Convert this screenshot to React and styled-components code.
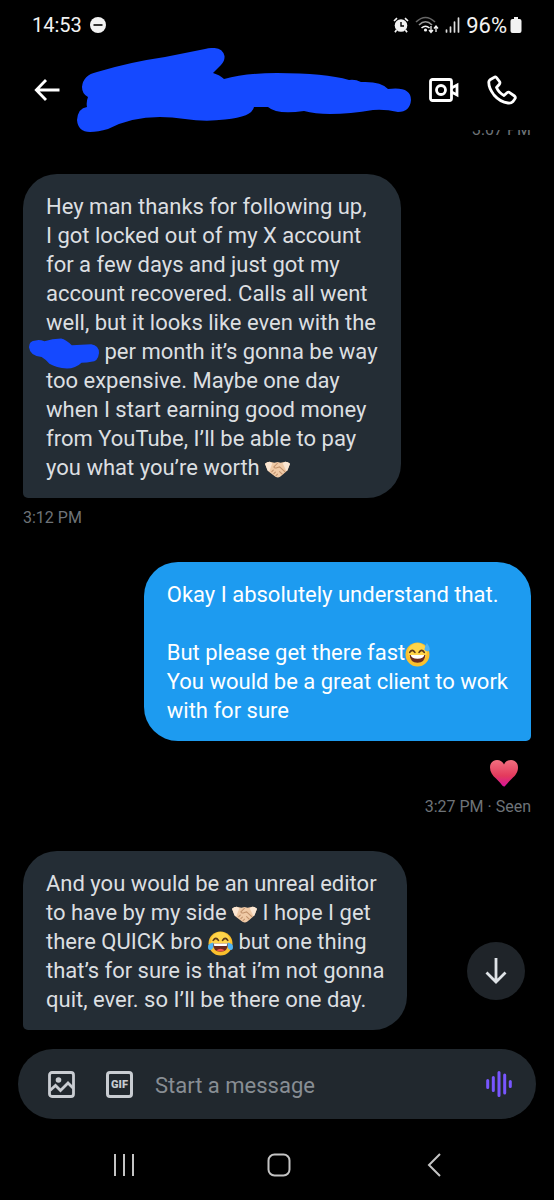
import React from "react";
import styled, { createGlobalStyle } from "styled-components";

const MESSAGES = [
    {
        id: 1,
        mine: false,
        lines: [
            ["Hey man thanks for following up,"],
            ["I got locked out of my X account"],
            ["for a few days and just got my"],
            ["account recovered. Calls all went"],
            ["well, but it looks like even with the"],
            [{ icon: "redacted" }, " per month it’s gonna be way"],
            ["too expensive. Maybe one day"],
            ["when I start earning good money"],
            ["from YouTube, I’ll be able to pay"],
            ["you what you’re worth ", { icon: "handshake" }],
        ],
        stamp: "3:12 PM",
    },
    {
        id: 2,
        mine: true,
        lines: [
            ["Okay I absolutely understand that."],
            [],
            ["But please get there fast", { icon: "sweat" }],
            ["You would be a great client to work"],
            ["with for sure"],
        ],
        reaction: true,
        stamp: "3:27 PM · Seen",
    },
    {
        id: 3,
        mine: false,
        lines: [
            ["And you would be an unreal editor"],
            ["to have by my side ", { icon: "handshake" }, " I hope I get"],
            ["there QUICK bro ", { icon: "joy" }, " but one thing"],
            ["that’s for sure is that i’m not gonna"],
            ["quit, ever. so I’ll be there one day."],
        ],
    },
];

const Handshake = () => (
    <Emoji viewBox="0 0 24 24" role="img" aria-label="handshake">
        <path
            d="M0 6.500Q2 4.500 4.500 4.500L9 5.500 12 4.800 15 5.500 19.500 4.500Q22 4.500 24 6.500L21.500 13 18 16 14.500 19Q12.500 20.500 10 19L4 14.500 2.500 13Z"
            fill="#f0caa6"
        />
        <path d="M0 6.500Q2 4.500 4.500 4.500L7 6 4 14 2.500 13Z" fill="#fbe6d2" />
        <path
            d="M24 6.500Q22 4.500 19.500 4.500L17 6 20.500 13.500 21.500 13Z"
            fill="#fbe6d2"
        />
        <path
            d="M12 6 8.500 9.500Q9 11.500 12 10L14 9.500 19 14M6.500 14 8 12.500M8.500 16 10 14.500M10.500 18 12 16.500M14 14 16.500 16.500"
            fill="none"
            stroke="#c2926c"
            strokeWidth="1"
            strokeLinecap="round"
        />
    </Emoji>
);

const Joy = () => (
    <Emoji viewBox="0 0 24 24" role="img" aria-label="face with tears of joy">
        <circle cx="12" cy="12" r="11.500" fill="#fbc02d" />
        <circle cx="12" cy="10" r="9" fill="#ffd54a" />
        <path
            d="M5 9Q7.500 5 10 9M14 9Q16.500 5 19 9"
            fill="none"
            stroke="#5d3a1a"
            strokeWidth="1.600"
            strokeLinecap="round"
        />
        <path d="M4.500 12H19.500Q19 20 12 20T4.500 12Z" fill="#6b2b1f" />
        <path d="M5.500 12H18.500L18 14.500H6Z" fill="#fff" />
        <path d="M8 18.500Q12 15.500 16 18.500 12 21 8 18.500Z" fill="#f0554a" />
        <path
            d="M5 11Q6 17 3 18T0 15Q0 12 5 11ZM19 11Q18 17 21 18T24 15Q24 12 19 11Z"
            fill="#4fb4f5"
        />
    </Emoji>
);

const Sweat = () => (
    <Emoji viewBox="0 0 24 24" role="img" aria-label="grinning face with sweat">
        <circle cx="12" cy="12" r="11.500" fill="#fbc02d" />
        <circle cx="12" cy="10" r="9" fill="#ffd54a" />
        <path
            d="M4.500 10Q7 6 9.500 10M13.500 10Q16 6 18.500 10"
            fill="none"
            stroke="#5d3a1a"
            strokeWidth="1.600"
            strokeLinecap="round"
        />
        <path
            d="M4.500 12.500H19.500Q19 20 12 20T4.500 12.500Z"
            fill="#6b2b1f"
        />
        <path d="M5.500 12.500H18.500Q18 16 12 16T5.500 12.500Z" fill="#fff" />
        <path d="M21 1Q24.500 6 23.500 8T19 8Q18 6 21 1Z" fill="#4fb4f5" />
    </Emoji>
);

const Redacted = () => (
    <Scribble viewBox="0 0 72 31" aria-hidden="true">
        <path
            d="M0 9Q0 2 7 2Q11 1 16 3Q24 0 33 0Q38 1 44 7L64 6Q72 7 72 15Q71 24 64 24Q60 25 54 25Q48 31 39 31Q28 30 21 26Q18 22 13 19Q1 18 0 9Z"
            fill="#1549ff"
        />
    </Scribble>
);

const ICONS = {
    handshake: Handshake,
    joy: Joy,
    sweat: Sweat,
    redacted: Redacted,
};

const Part = ({ part }) => {
    if (typeof part === "string") return part;
    const Icon = ICONS[part.icon];
    return <Icon />;
};

const StatusBar = () => (
    <Status>
        <StatusGroup>
            <Clock>14:53</Clock>
            <svg width="16" height="16" viewBox="0 0 16 16">
                <circle cx="8" cy="8" r="8" fill="#f2f2f2" />
                <path d="M3.500 8H12.500" stroke="#000" strokeWidth="1.600" />
            </svg>
        </StatusGroup>
        <StatusIcons>
            <svg width="16" height="16" viewBox="0 0 16 16">
                <circle cx="8" cy="8.500" r="6.300" fill="#f2f2f2" />
                <path
                    d="M1 4 4 1.200M15 4 12 1.200M3.500 13 2 15.300M12.500 13 14 15.300"
                    stroke="#f2f2f2"
                    strokeWidth="1.700"
                />
                <path
                    d="M8 5V9H11"
                    fill="none"
                    stroke="#000"
                    strokeWidth="1.400"
                />
            </svg>
            <svg width="24" height="18" viewBox="0 0 24 18">
                <g fill="none" strokeWidth="1.600">
                    <path d="M1 6Q10.500-3 20 6" stroke="#666" />
                    <path d="M4 9Q10.500 2.500 17 9" stroke="#999" />
                    <path d="M6.500 12Q10.500 8.500 14.500 12" stroke="#f2f2f2" />
                    <path
                        d="M16 10V16M14 14 16 16.500 18 14M21 16V10.500M19 12.500 21 10 23 12.500"
                        stroke="#f2f2f2"
                        strokeWidth="1.300"
                    />
                </g>
                <circle cx="10.500" cy="14" r="1.600" fill="#f2f2f2" />
            </svg>
            <svg width="15" height="16" viewBox="0 0 15 16">
                <path
                    d="M1.500 13V15M5.500 10V15M9.500 5V15M13.500 1V15"
                    stroke="#ddd"
                    strokeWidth="1.700"
                    strokeLinecap="round"
                />
            </svg>
            <Battery>
                96%
                <svg width="12" height="18" viewBox="0 0 12 18">
                    <path
                        d="M4 1H8V3H9.500Q11.500 3 11.500 5V15Q11.500 17 9.500 17H2.500Q.5 17 .5 15V5Q.5 3 2.500 3H4Z"
                        fill="#f2f2f2"
                    />
                </svg>
            </Battery>
        </StatusIcons>
    </Status>
);

const ChatHeader = () => (
    <Header>
        <IconButton aria-label="Back">
            <svg width="26" height="22" viewBox="0 0 26 22">
                <path
                    d="M25.500 11H2.500M12 1 2.300 11 12 21"
                    fill="none"
                    stroke="#fff"
                    strokeWidth="2.800"
                />
            </svg>
        </IconButton>
        <Name viewBox="77 47 334 84" aria-hidden="true">
            <path
                d="M82 86Q83 74 97 71Q130 61 165 56L205 48Q222 44 224.500 55Q225 60 221 64L213 72Q220 74 224 78Q245 72 277 72Q325 72 349 79Q355 78 361 81Q381 80 388 88Q411 85 411 99Q410 111 398 111Q385 108 373 109Q350 113 330 113Q315 113 304 110Q277 114 268 106H254Q252 116 225 118.500Q205 121 185 118Q140 111 108 128Q98 131 90 131Q78 131 77 119Q78 107 87 106Q86 101 88 96Q82 93 82 86Z"
                fill="#1549ff"
            />
        </Name>
        <HeaderActions>
            <IconButton aria-label="Video call">
                <svg width="30" height="24" viewBox="0 0 30 24">
                    <rect
                        x="1.500"
                        y="1.500"
                        width="21"
                        height="21"
                        rx="2"
                        fill="none"
                        stroke="#fff"
                        strokeWidth="2.800"
                    />
                    <circle
                        cx="12"
                        cy="12"
                        r="4.500"
                        fill="none"
                        stroke="#fff"
                        strokeWidth="2.800"
                    />
                    <path
                        d="M22.500 10 28 7V17L22.500 14"
                        fill="none"
                        stroke="#fff"
                        strokeWidth="2.800"
                    />
                </svg>
            </IconButton>
            <IconButton aria-label="Call">
                <svg width="30" height="30" viewBox="0 0 30 30">
                    <path
                        d="M7 2.500Q8.500 1.300 9.700 2.800L12.500 6.500Q13.500 8 12.200 9.500L9.500 12.500Q12 18 17 20.500L20 17.800Q21.500 16.500 23 17.800L27.500 21Q29 22.500 27.800 24L26 26.500Q24 28.500 21 28Q13 27 7 20Q1.500 13 1.800 7Q2 5.500 3 4.800Z"
                        fill="none"
                        stroke="#fff"
                        strokeWidth="2.800"
                        strokeLinejoin="round"
                    />
                </svg>
            </IconButton>
        </HeaderActions>
    </Header>
);

const Message = ({ message }) => (
    <MessageItem $mine={message.mine}>
        <Bubble $mine={message.mine}>
            {message.lines.map((line, i) => (
                <Line key={i}>
                    {line.map((part, j) => (
                        <Part key={j} part={part} />
                    ))}
                </Line>
            ))}
        </Bubble>
        {message.reaction && (
            <Heart viewBox="0 0 28 28" role="img" aria-label="heart">
                <defs>
                    <linearGradient id="heart" x1="0" y1="0" x2="0" y2="1">
                        <stop offset="0" stopColor="#f2707f" />
                        <stop offset="0.600" stopColor="#e33a5c" />
                        <stop offset="1" stopColor="#d8129b" />
                    </linearGradient>
                </defs>
                <path
                    d="M14 27.500C12.500 27.500 11 24 6 19.500C2.500 16.500 0 13 0 8.500C0 3.500 3.500 1 7 1C10.500 1 13 3 14 5.500C15 3 17.500 1 21 1C24.500 1 28 3.500 28 8.500C28 13 25.500 16.500 22 19.500C17 24 15.500 27.500 14 27.500Z"
                    fill="url(#heart)"
                />
            </Heart>
        )}
        {message.stamp && <Stamp>{message.stamp}</Stamp>}
    </MessageItem>
);

const Composer = () => (
    <ComposerBar>
        <IconButton aria-label="Add photo">
            <svg width="27" height="27" viewBox="0 0 27 27">
                <rect
                    x="1.500"
                    y="1.500"
                    width="24"
                    height="24"
                    rx="2.500"
                    fill="none"
                    stroke="#c9cdd2"
                    strokeWidth="2.800"
                />
                <circle cx="10.500" cy="9" r="2.800" fill="#c9cdd2" />
                <path
                    d="M2 19.500 7.500 14.500 12.500 19.500 20 12 25.500 17.500"
                    fill="none"
                    stroke="#c9cdd2"
                    strokeWidth="2.800"
                />
            </svg>
        </IconButton>
        <GifButton>GIF</GifButton>
        <MessageInput placeholder="Start a message" aria-label="Message" />
        <IconButton aria-label="Record voice message">
            <svg width="26" height="28" viewBox="0 0 26 28">
                <path
                    d="M1.700 10.500V17.500M7.300 7.500V20.500M13 2.500V25.500M18.700 5V23M24.300 11.500V16.500"
                    stroke="#7856ff"
                    strokeWidth="3"
                    strokeLinecap="round"
                />
            </svg>
        </IconButton>
    </ComposerBar>
);

const App = () => {
    return (
        <>
            <GlobalStyle />
            <Page>
                <StatusBar />
                <ChatHeader />
                <Thread>
                    <ClippedStamp>3:07 PM</ClippedStamp>
                    {MESSAGES.map((message) => (
                        <Message key={message.id} message={message} />
                    ))}
                    <ScrollButton aria-label="Scroll to latest">
                        <svg width="22" height="26" viewBox="0 0 22 26">
                            <path
                                d="M11 0V24M1.500 14.500 11 24 20.500 14.500"
                                fill="none"
                                stroke="#dfe3e7"
                                strokeWidth="2.800"
                            />
                        </svg>
                    </ScrollButton>
                </Thread>
                <Composer />
                <NavBar>
                    <NavButton aria-label="Recent apps">
                        <svg width="22" height="24" viewBox="0 0 22 24">
                            <path
                                d="M2 1V23M11 1V23M20 1V23"
                                stroke="#c4c4c4"
                                strokeWidth="2"
                            />
                        </svg>
                    </NavButton>
                    <NavButton aria-label="Home">
                        <svg width="24" height="24" viewBox="0 0 24 24">
                            <rect
                                x="1.500"
                                y="1.500"
                                width="21"
                                height="21"
                                rx="6"
                                fill="none"
                                stroke="#c4c4c4"
                                strokeWidth="2"
                            />
                        </svg>
                    </NavButton>
                    <NavButton aria-label="Go back">
                        <svg width="14" height="24" viewBox="0 0 14 24">
                            <path
                                d="M13 1 2 12 13 23"
                                fill="none"
                                stroke="#c4c4c4"
                                strokeWidth="2"
                            />
                        </svg>
                    </NavButton>
                </NavBar>
            </Page>
        </>
    );
};

export default App;

const GlobalStyle = createGlobalStyle`
    * {
        box-sizing: border-box;
    }
    body {
        margin: 0;
        background: #000;
        font-family: Roboto, "Liberation Sans", sans-serif;
    }
    svg {
        display: block;
        flex-shrink: 0;
    }
    button {
        padding: 0;
        border: 0;
        background: none;
        cursor: pointer;
    }
`;

const Page = styled.div`
    display: flex;
    flex-direction: column;
    min-height: 100vh;
    background: #000;
    color: #fff;
`;

const Status = styled.div`
    display: flex;
    align-items: center;
    justify-content: space-between;
    height: 50px;
    padding: 0 32px;
    font-size: 22px;
    color: #f2f2f2;
`;

const StatusGroup = styled.div`
    display: flex;
    align-items: center;
    gap: 8px;
`;

const StatusIcons = styled(StatusGroup)`
    gap: 6px;
`;

const Clock = styled.time`
    font-size: 20px;
`;

const Battery = styled.span`
    display: flex;
    align-items: center;
    gap: 3px;
`;

const Header = styled.header`
    display: flex;
    align-items: center;
    height: 80px;
    padding: 0 37px 0 34px;
`;

const IconButton = styled.button`
    display: flex;
    align-items: center;
    justify-content: center;
`;

const Name = styled.svg`
    width: 334px;
    height: 84px;
    margin-left: 17px;
`;

const HeaderActions = styled.div`
    display: flex;
    align-items: center;
    gap: 28px;
    margin-left: auto;
`;

const Thread = styled.main`
    position: relative;
    flex: 1;
    display: flex;
    flex-direction: column;
    gap: 34px;
    overflow: hidden;
    padding: 0 23px 18px;
`;

const MessageItem = styled.div`
    display: flex;
    flex-direction: column;
    align-items: ${({ $mine }) => ($mine ? "flex-end" : "flex-start")};
`;

const Bubble = styled.div`
    padding: 18px 23px 16px;
    border-radius: ${({ $mine }) =>
        $mine ? "34px 34px 5px 34px" : "34px 34px 34px 5px"};
    background: ${({ $mine }) => ($mine ? "#1d9bf0" : "#242d35")};
    color: ${({ $mine }) => ($mine ? "#fff" : "#dcdfe1")};
    font-size: 22px;
    line-height: 29px;
`;

const Line = styled.p`
    margin: 0;
    min-height: 29px;
    white-space: pre-wrap;
`;

const Emoji = styled.svg`
    display: inline-block;
    width: 25px;
    height: 25px;
    margin: -4px 0;
    vertical-align: middle;
`;

const Scribble = styled.svg`
    display: inline-block;
    width: 70px;
    height: 31px;
    margin: -8px 0 -8px -17px;
    vertical-align: middle;
`;

const Heart = styled.svg`
    width: 28px;
    height: 28px;
    margin: 18px 13px 0 0;
`;

const Stamp = styled.time`
    margin-top: 10px;
    font-size: 16px;
    line-height: 20px;
    color: #6e7378;
`;

/* half of it sits under the header, as the thread is scrolled */
const ClippedStamp = styled(Stamp)`
    align-self: flex-end;
    margin-top: -10px;
`;

const ScrollButton = styled.button`
    position: absolute;
    right: 29px;
    bottom: 49px;
    display: flex;
    align-items: center;
    justify-content: center;
    width: 58px;
    height: 58px;
    && {
        border-radius: 50%;
        background: #1f2429;
    }
`;

const ComposerBar = styled.div`
    display: flex;
    align-items: center;
    height: 70px;
    margin: 0 18px;
    padding: 0 24px 0 30px;
    border-radius: 35px;
    background: #21282e;
`;

const GifButton = styled.button`
    width: 27px;
    height: 27px;
    margin: 0 22px 0 31px;
    && {
        border: 3px solid #c9cdd2;
        border-radius: 4px;
    }
    color: #c9cdd2;
    font: 900 11px/21px Roboto, sans-serif;
`;

const MessageInput = styled.input`
    flex: 1;
    min-width: 0;
    padding: 2px 0 0;
    border: 0;
    outline: 0;
    background: none;
    color: #dcdfe1;
    font: 22px/29px Roboto, sans-serif;
    &::placeholder {
        color: #888e94;
        opacity: 1;
    }
`;

const NavBar = styled.nav`
    display: flex;
    padding: 34px 42px 23px 46px;
`;

const NavButton = styled.button`
    flex: 1;
    display: flex;
    justify-content: center;
`;
